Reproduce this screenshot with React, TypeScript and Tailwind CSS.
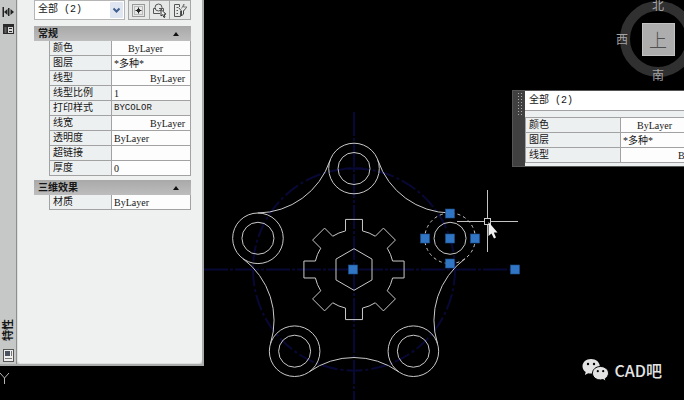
import React, { useState } from "react";
import clsx from "clsx";

type Property = {
  label: string;
  value: string;
  kind?: "swatch" | "line" | "readonly";
};

const general: Property[] = [
  { label: "颜色", value: "ByLayer", kind: "swatch" },
  { label: "图层", value: "*多种*" },
  { label: "线型", value: "ByLayer", kind: "line" },
  { label: "线型比例", value: "1" },
  { label: "打印样式", value: "BYCOLOR", kind: "readonly" },
  { label: "线宽", value: "ByLayer", kind: "line" },
  { label: "透明度", value: "ByLayer" },
  { label: "超链接", value: "" },
  { label: "厚度", value: "0" },
];

const effects: Property[] = [{ label: "材质", value: "ByLayer" }];

// Centre of the part and radius of the bolt circle
const CX = 354;
const CY = 269.5;
const BOLT_RADIUS = 101;

const polar = (radius: number, degrees: number) => {
  const a = (degrees * Math.PI) / 180;
  return { x: CX + radius * Math.cos(a), y: CY + radius * Math.sin(a) };
};

const bosses = [0, 1, 2, 3, 4].map((i) => polar(BOLT_RADIUS, -90 + i * 72));

// Fillet between two neighbouring bosses, bowed towards the centre
const fillets = [0, 1, 2, 3, 4].map((i) => {
  const mid = -54 + i * 72;
  const centre = polar(165, mid);
  const [a, b] = [-36, 36].map((offset) => {
    const boss = polar(BOLT_RADIUS, mid + offset);
    const t = 77 / 102.3;
    return {
      x: centre.x + (boss.x - centre.x) * t,
      y: centre.y + (boss.y - centre.y) * t,
    };
  });
  return `M${a.x} ${a.y}A77 77 0 0 0 ${b.x} ${b.y}`;
});

const gear =
  [0, 1, 2, 3, 4, 5, 6, 7]
    .map((i) => {
      const angle = i * 45;
      const root = polar(39.5, angle - 12.4);
      const tipA = polar(50.8, angle - 9.6);
      const tipB = polar(50.8, angle + 9.6);
      const end = polar(39.5, angle + 12.4);
      const start = i === 0 ? "M" : "A39.5 39.5 0 0 1 ";
      return `${start}${root.x} ${root.y}L${tipA.x} ${tipA.y}L${tipB.x} ${tipB.y}L${end.x} ${end.y}`;
    })
    .join("") +
  `A39.5 39.5 0 0 1 ${polar(39.5, -12.4).x} ${polar(39.5, -12.4).y}Z`;

const hexagon = [0, 1, 2, 3, 4, 5]
  .map((i) => polar(20.8, 30 + i * 60))
  .map((p) => `${p.x},${p.y}`)
  .join(" ");

const grips = [
  [353, 269.5],
  [450, 213.5],
  [425, 238.5],
  [450, 238.5],
  [475, 238.5],
  [450, 263.5],
  [515, 269.5],
];

const Drawing: React.FC = () => (
  <svg
    width="684"
    height="400"
    viewBox="0 0 684 400"
    fill="none"
    className="absolute top-0 left-0"
  >
    {/* centre lines */}
    <g stroke="#080836" strokeWidth="2">
      <path d="M354 112V400M204 269.5H520" strokeDasharray="24 2 3 2" />
      <circle cx={CX} cy={CY} r={BOLT_RADIUS} strokeDasharray="16 3 3 3" />
      <path d="M345 168.5H363" />
    </g>

    {/* part */}
    <g stroke="#c9c9c9">
      {bosses.map((b, i) => (
        <g key={i}>
          <circle
            cx={b.x}
            cy={b.y}
            r="25.3"
            strokeDasharray={i === 1 ? "3 3" : undefined}
          />
          <circle cx={b.x} cy={b.y} r="16" />
        </g>
      ))}
      {fillets.map((d) => (
        <path key={d} d={d} />
      ))}
      <path d={gear} />
      <polygon points={hexagon} />
    </g>

    {grips.map(([x, y]) => (
      <rect
        key={`${x}-${y}`}
        x={x - 4.5}
        y={y - 4.5}
        width="9"
        height="9"
        fill="#3176c4"
        stroke="#1c4f8c"
        strokeWidth="0.6"
      />
    ))}

    {/* crosshair and pointer */}
    <path d="M487.5 190V252M457 221.5H518" stroke="#c4c4c4" />
    <rect x="484.5" y="218.5" width="6" height="6" fill="#000" stroke="#ccc" />
    <path
      d="M488.5 222V236L491.5 233.5L494 238.5L496 237.5L493.8 232.5H497.5Z"
      fill="#f2f2f2"
    />

    {/* Y axis of the UCS icon */}
    <path d="M0 373L4.5 378L9 373M4.5 378V384" stroke="#b5b5b5" />
  </svg>
);

const PropertyTable: React.FC<{ rows: Property[]; wide?: boolean }> = ({
  rows,
  wide,
}) => (
  <table className="w-full table-fixed border-separate border-spacing-0 border-l border-[#a2a2a2] text-left">
    <tbody>
      {rows.map((row) => (
        <tr key={row.label} className="h-[15px]">
          <th
            scope="row"
            className={clsx(
              "border-r border-b border-[#a2a2a2] bg-[#edf0f0] p-0 pl-[3px] align-top font-normal",
              wide ? "w-[95px]" : "w-[62px]",
            )}
          >
            <div className="h-[14px] leading-[14px]">{row.label}</div>
          </th>
          <td
            className={clsx(
              "border-r border-b border-[#a2a2a2] p-0",
              row.kind === "readonly"
                ? "bg-[#eceeee] font-['Liberation_Mono','Noto_Sans_CJK_SC',monospace] text-[9px]"
                : "bg-[#fdfdfd]",
            )}
          >
            <div
              className={clsx(
                "h-[14px]",
                row.kind === "readonly" ? "leading-[14px]" : "leading-4",
                row.kind === "swatch" && "pl-4",
                row.kind === "line" && "pr-[5px] text-right",
                row.kind !== "swatch" && row.kind !== "line" && "pl-[2px]",
              )}
            >
              {row.value}
            </div>
          </td>
        </tr>
      ))}
    </tbody>
  </table>
);

const Category: React.FC<{ title: string; rows: Property[] }> = ({
  title,
  rows,
}) => {
  const [open, setOpen] = useState(true);

  return (
    <section>
      <button
        type="button"
        aria-expanded={open}
        onClick={() => setOpen(!open)}
        className="flex h-[15px] w-full items-center justify-between bg-linear-to-b from-[#a9a9a9] to-[#bdbdbd] pr-3 pl-1 font-bold"
      >
        {title}
        <svg width="6" height="4" viewBox="0 0 6 4">
          <path d="M0 4L3 0L6 4Z" fill="#111" />
        </svg>
      </button>
      {open && (
        <div className="pl-[15px]">
          <PropertyTable rows={rows} />
        </div>
      )}
    </section>
  );
};

const ToolButton: React.FC<{ label: string; children: React.ReactNode }> = ({
  label,
  children,
}) => (
  <button
    type="button"
    aria-label={label}
    className="flex h-5 flex-1 items-center justify-center border border-l-0 border-[#a6a6a6] bg-[#e6e8e8] first:border-l"
  >
    <svg
      width="15"
      height="15"
      viewBox="0 0 15 15"
      fill="none"
      stroke="#555"
      strokeWidth="1"
    >
      {children}
    </svg>
  </button>
);

const PropertiesPalette: React.FC = () => (
  <aside className="absolute top-0 left-0 flex w-[204px] border-r-2 border-b-2 border-[#a9acab] bg-[#c6c8c8]">
    <div className="flex w-[17px] flex-col items-center border-r border-[#8e8e8e] pt-1.5 pb-[2px]">
      <svg width="12" height="12" viewBox="0 0 12 12" fill="#222">
        <path d="M0.500 1H2V11H0.500ZM2 6L5.500 3V9ZM6 2H7.500V10H6ZM8.500 3L12 6L8.500 9Z" />
      </svg>
      <svg width="11" height="10" viewBox="0 0 11 10" className="mt-1.5">
        <rect width="11" height="10" fill="#2a2a2a" />
        <path d="M5 3H10V9H5Z" fill="#d5d5d5" />
        <path d="M1.500 4H3.500M1.500 6H3.500M1.500 8H3.500" stroke="#999" />
        <path d="M6 4.500H9M6 7.500H9" stroke="#2a2a2a" />
      </svg>
      <span className="mt-auto rotate-180 text-[11px] leading-[14px] font-bold [text-orientation:sideways] [writing-mode:vertical-rl]">
        特性
      </span>
      <svg width="11" height="13" viewBox="0 0 11 13" className="mt-2">
        <rect x=".5" y=".5" width="10" height="12" fill="#eee" stroke="#555" />
        <path d="M2 2H7V7H2Z" fill="#49525e" />
        <path d="M8.5 2V7M2 9.5H9" stroke="#777" />
      </svg>
    </div>
    <div className="min-h-[364px] flex-1 rounded-b-sm border-b border-l border-[#dcdfde] bg-[#eef1f0] pr-[11px] pl-4">
      <div className="flex gap-[3px]">
        <div className="relative w-[91px]">
          <select
            aria-label="选择对象类型"
            className="h-5 w-full appearance-none border border-[#b5b5b5] bg-white pl-[3px] font-['Liberation_Mono','Noto_Sans_CJK_SC',monospace]"
          >
            <option>全部 (2)</option>
          </select>
          <svg
            width="13"
            height="16"
            viewBox="0 0 13 16"
            className="pointer-events-none absolute top-0.5 right-0.5"
          >
            <rect width="13" height="16" rx="1" fill="#dfe6f2" />
            <path
              d="M3.5 6.5L6.5 9.5L9.5 6.5"
              fill="none"
              stroke="#41608f"
              strokeWidth="2"
            />
          </svg>
        </div>
        <div className="flex flex-1">
          <ToolButton label="切换 PICKADD">
            <rect x="1.5" y="1.5" width="12" height="12" stroke="#999" />
            <rect x="3.5" y="3.5" width="8" height="8" stroke="#bbb" />
            <path d="M7.5 4.5V10.5M4.5 7.5H10.5" stroke="#222" />
            <path d="M6 6L9 9M9 6L6 9" stroke="#333" />
          </ToolButton>
          <ToolButton label="选择对象">
            <circle cx="6.500" cy="4.500" r="3.500" />
            <path d="M4 5.500H1.500V10.500H8M7 5.500H11.500V8" />
            <path d="M9 6.500V13L10.600 11.700L12 14.500L13 14L12 11.200H14Z" fill="#eee" stroke="#333" />
          </ToolButton>
          <ToolButton label="快速选择">
            <path d="M1.5 1.5H6.5V4M1.5 1.5V13.5H7.5V8M3.5 4.5H5M3.5 7.5H5M3.5 10.5H5" />
            <path d="M5.500 4.500L8.500 8V13L10.500 11V8L13.500 4.500" stroke="#444" />
            <path d="M8.500 5.500L11 1L10.500 4H14L10 8" stroke="#777" />
          </ToolButton>
        </div>
      </div>
      <div className="mt-1.5 flex flex-col gap-1">
        <Category title="常规" rows={general} />
        <Category title="三维效果" rows={effects} />
      </div>
    </div>
  </aside>
);

const QuickProperties: React.FC = () => (
  <aside className="absolute top-[90px] -right-9 flex w-[208px] border border-[#555] bg-[#404040]">
    <svg width="12" height="24" viewBox="0 0 12 24" className="shrink-0">
      <path
        d="M5.5 2V24M8.5 2V24"
        stroke="#aaa"
        strokeDasharray="1 2"
        strokeWidth="1"
      />
    </svg>
    <div className="flex-1 bg-[#edf0f0] pb-[3px]">
      <select
        aria-label="对象类型"
        className="h-5 w-full appearance-none border-b border-[#a2a2a2] bg-white pl-1 font-['Liberation_Mono','Noto_Sans_CJK_SC',monospace]"
      >
        <option>全部 (2)</option>
      </select>
      <div className="mt-1.5 border-t border-[#a2a2a2]">
        <PropertyTable rows={general.slice(0, 3)} wide />
      </div>
    </div>
  </aside>
);

const ViewCube: React.FC = () => (
  <nav className="absolute -top-[3px] -right-4 flex size-[84px] items-center justify-center text-xs leading-none text-[#a5a5a5]">
    <div className="absolute inset-1 rounded-full border-[10px] border-[#303030]" />
    <button type="button" className="absolute top-0.5">
      北
    </button>
    <button type="button" className="absolute left-0">
      西
    </button>
    <button type="button" className="absolute bottom-0">
      南
    </button>
    <button
      type="button"
      className="size-[33px] border border-[#c2c2c2] bg-[#adadad] text-lg leading-none font-light text-[#505050]"
    >
      上
    </button>
  </nav>
);

const Watermark: React.FC = () => (
  <div className="absolute right-[22px] bottom-[18px] flex items-center gap-1.5 text-base leading-6 font-medium text-[#e4e4e4]">
    <svg width="27" height="24" viewBox="0 0 27 24">
      <path
        d="M9 1C4 1 .5 4.2.5 8.2C.5 10.600 1.700 12.600 3.700 14L2.900 17L6.200 15.200C7.100 15.400 8 15.500 9 15.500C14 15.500 17.800 12.300 17.800 8.200C17.800 4.200 14 1 9 1Z"
        fill="#e4e4e4"
      />
      <path
        d="M18.500 8.500C13.900 8.500 10.500 11.500 10.500 15.200C10.500 19 13.900 21.900 18.500 21.900C19.400 21.900 20.200 21.800 21 21.600L24 23.200L23.300 20.500C25.200 19.300 26.500 17.400 26.500 15.200C26.500 11.500 23 8.500 18.500 8.500Z"
        fill="#e4e4e4"
        stroke="#000"
        strokeWidth="1"
      />
      <g fill="#000">
        <circle cx="6" cy="6" r="1.200" />
        <circle cx="12" cy="6" r="1.200" />
        <circle cx="15.800" cy="13.200" r="1.100" />
        <circle cx="21.200" cy="13.200" r="1.100" />
      </g>
    </svg>
    <span>CAD吧</span>
  </div>
);

export default function App() {
  return (
    <main className="relative h-screen overflow-hidden bg-black font-['Liberation_Serif','Noto_Sans_CJK_SC',serif] text-[10px] leading-[14px] text-[#161616]">
      <Drawing />
      <PropertiesPalette />
      <div className="font-['Noto_Sans_CJK_SC',sans-serif]">
        <ViewCube />
        <Watermark />
      </div>
      <QuickProperties />
    </main>
  );
}
